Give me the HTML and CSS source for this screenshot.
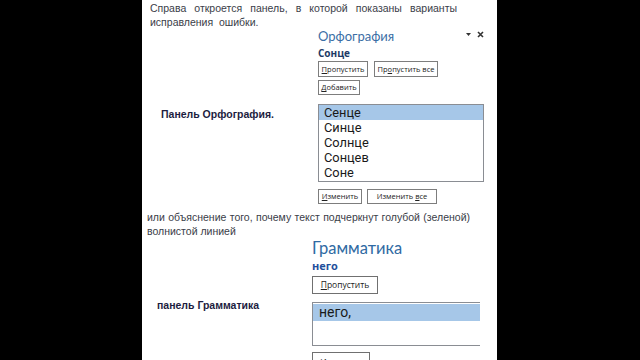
FILE: index.html
```html
<!DOCTYPE html>
<html lang="ru">
<head>
<meta charset="utf-8">
<link rel="stylesheet" href="styles.css">
</head>
<body>
<div class="page">
  <p class="intro">Справа откроется панель, в которой показаны варианты исправления&nbsp; ошибки.</p>

  <section class="spell">
    <div class="label spell-label">Панель Орфография.</div>
    <div class="pane">
      <div class="pane-head">
        <span class="pane-title">Орфография</span>
        <svg class="pane-ctrl" width="20" height="8" viewBox="0 0 20 8">
          <path d="M1 2 L6 2 L3.5 5 Z" fill="#333"/>
          <path d="M13 1 L18 6 M18 1 L13 6" stroke="#333" stroke-width="1.6"/>
        </svg>
      </div>
      <div class="word word-dark">Сонце</div>
      <div class="btns">
        <span class="btn b-skip"><u>П</u>ропустить</span>
        <span class="btn b-skipall">Пр<u>о</u>пустить все</span>
      </div>
      <div class="btns btns-add">
        <span class="btn b-add"><u>Д</u>обавить</span>
      </div>
      <div class="list list-spell">
        <div class="item sel">Сенце</div>
        <div class="item">Синце</div>
        <div class="item">Солнце</div>
        <div class="item">Сонцев</div>
        <div class="item">Соне</div>
      </div>
      <div class="btns btns-change">
        <span class="btn b-change"><u>И</u>зменить</span>
        <span class="btn b-changeall">Изменить <u>в</u>се</span>
      </div>
    </div>
  </section>

  <p class="para">или объяснение того, почему текст подчеркнут голубой (зеленой) волнистой линией</p>

  <section class="gram">
    <div class="label gram-label">панель Грамматика</div>
    <div class="pane">
      <div class="gram-title">Грамматика</div>
      <div class="word word-blue">него</div>
      <div class="btns btns-gskip">
        <span class="btn gbtn"><u>П</u>ропустить</span>
      </div>
      <div class="list list-gram">
        <div class="gitem sel">него,</div>
      </div>
      <div class="btns btns-gchange">
        <span class="btn gbtn gbtn-change">Изменить</span>
      </div>
    </div>
  </section>
</div>
</body>
</html>
```

FILE: styles.css
```css
html, body {
  margin: 0;
  padding: 0;
  background: #000;
}
body {
  width: 640px;
  height: 360px;
  overflow: hidden;
}
.page {
  margin-left: 142px;
  width: 355px;
  height: 360px;
  background: #fff;
  overflow: hidden;
}
.intro {
  margin: 0 0 0 8px;
  padding-top: 1px;
  width: 307px;
  text-align: justify;
  font: 10.5px/14px "Liberation Sans", Arial, sans-serif;
  color: #3a3d48;
}
.label {
  font: bold 10.5px/12px "Liberation Sans", Arial, sans-serif;
  color: #1d1d3f;
}
.spell {
  display: grid;
  grid-template-columns: 176px 168px;
  margin-top: 1px;
}
.spell-label {
  padding: 78px 0 0 19px;
}
.pane-head {
  display: flex;
  justify-content: space-between;
  align-items: center;
  height: 12px;
}
.pane-title {
  font: 13px/12px Lato, sans-serif;
  color: #3b6ea5;
}
.pane-ctrl {
  margin-right: 1px;
  margin-top: -2px;
}
.word {
  font: bold 10px/12px "Open Sans", sans-serif;
  margin-top: 5px;
}
.word-dark {
  color: #1d3a66;
}
.btns {
  display: flex;
  gap: 6px;
  margin-top: 2px;
}
.btn {
  box-sizing: border-box;
  display: block;
  text-align: center;
  white-space: nowrap;
  border: 1px solid #7d7d7d;
  background: #fff;
  font: 7.5px/14px "Open Sans", sans-serif;
  color: #222;
  height: 16px;
}
.btn u {
  text-underline-offset: 1px;
}
.b-skip { width: 50px; }
.b-skipall { width: 64px; }
.btns-add { margin-top: 3px; }
.b-add { width: 42px; height: 15px; line-height: 13px; }
.list {
  box-sizing: border-box;
  border: 1px solid #8a8d93;
  background: #fff;
}
.list-spell {
  margin-top: 9px;
  width: 166px;
  height: 78px;
}
.item {
  font: 12.8px/15px Roboto, sans-serif;
  color: #1a1a1a;
  padding-left: 5px;
}
.sel {
  background: #a6c7e8;
}
.btns-change {
  margin-top: 7px;
  gap: 5px;
}
.b-change { width: 44px; height: 15px; line-height: 13px; }
.b-changeall { width: 70px; height: 15px; line-height: 13px; }

.para {
  margin: 6px 0 0 5px;
  width: 323px;
  text-align: justify;
  font: 10.5px/14px "Liberation Sans", Arial, sans-serif;
  color: #3a3d48;
}
.gram {
  display: grid;
  grid-template-columns: 170px 185px;
}
.gram-label {
  padding: 61px 0 0 15px;
}
.gram-title {
  font: 16.5px/20px Lato, sans-serif;
  color: #2f6aa3;
}
.word-blue {
  font-size: 11px;
  color: #1f4f9c;
  margin-top: 2px;
}
.btns-gskip { margin-top: 4px; }
.gbtn {
  width: 66px;
  height: 18px;
  line-height: 16px;
  font-size: 8.5px;
  border-color: #707070;
}
.list-gram {
  margin-top: 8px;
  width: 168px;
  height: 44px;
  padding-top: 1px;
  border-right: none;
}
.gitem {
  font: 14px/17px Roboto, sans-serif;
  color: #1a1a1a;
  padding-left: 6px;
}
.btns-gchange { margin-top: 6px; }
.gbtn-change {
  width: 58px;
  line-height: 20px;
}
```
